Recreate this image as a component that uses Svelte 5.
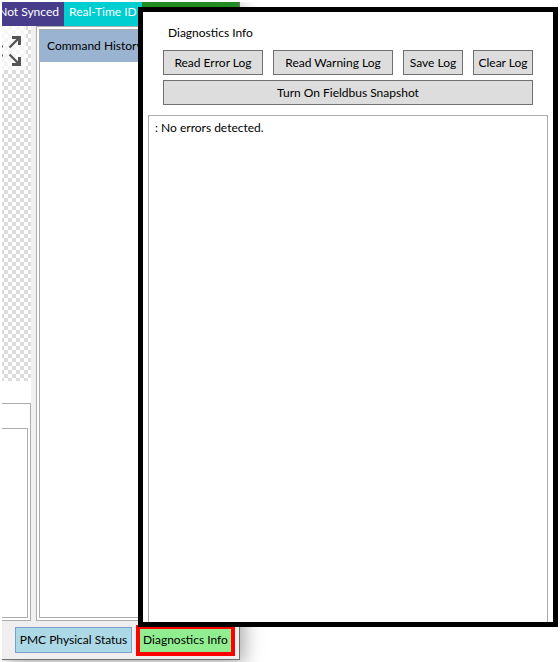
<script>
  const actions = ['Read Error Log', 'Read Warning Log', 'Save Log', 'Clear Log'];
  let log = $state(': No errors detected.');
  let snapshot = $state(false);
</script>

<div class="stage">
  <main class="window">
    <header class="status">
      <span class="sync">Not Synced</span>
      <span class="realtime">Real-Time ID</span>
      <span class="ok"></span>
    </header>

    <div class="body">
      <section class="left">
        <div class="canvas">
          <button class="expand" aria-label="Expand view">
            <svg viewBox="0 0 24 44" width="24" height="44" fill="none" stroke="#555" stroke-width="2.4">
              <path d="M7.500 21.500 17 12M7.500 28.500 17 38" />
              <path d="M10 11.500H17.500V19M10 38.500H17.500V31" stroke-width="3" />
              <path d="M0 20.500H1M0 29.500H1" stroke-width="2" />
            </svg>
          </button>
        </div>
        <div class="pane"><div class="pane-inner"></div></div>
      </section>
      <section class="history">
        <div class="history-inner">
          <h2>Command History</h2>
        </div>
      </section>
    </div>

    <footer>
      <button class="tab">PMC Physical Status</button>
      <button class="tab active">Diagnostics Info</button>
    </footer>
  </main>

  <aside class="popup">
    <h1>Diagnostics Info</h1>
    <div class="actions">
      {#each actions as label}
        <button>{label}</button>
      {/each}
      <button class="wide" onclick={() => (snapshot = !snapshot)}>Turn {snapshot ? 'Off' : 'On'} Fieldbus Snapshot</button>
    </div>
    <output class="log">{log}</output>
  </aside>
</div>

<style>
  :global(body) {
    background: #fff;
  }
  .stage,
  .stage * {
    box-sizing: border-box;
  }
  .stage {
    position: relative;
    height: 100vh;
    min-height: 400px;
    padding: 2px 0;
    overflow: hidden;
    display: flex;
    font: 12px/16px Lato, 'Open Sans', sans-serif;
    color: #000;
  }
  button {
    font: inherit;
    color: inherit;
    padding: 0;
    margin: 0;
    border-radius: 0;
    white-space: nowrap;
  }
  h1,
  h2 {
    margin: 0;
    font: inherit;
  }
  .window {
    flex: 1;
    min-width: 0;
    margin: 0 320px 0 2px;
    display: flex;
    flex-direction: column;
    background: #f0eeee;
    border: solid #6f6f6f;
    border-width: 0 1px 1px 0;
    box-shadow: 4px 4px 18px rgba(0, 0, 0, 0.35);
    clip-path: inset(0 -40px -40px 0);
  }
  .status {
    display: flex;
    height: 24px;
    color: #fff;
    line-height: 20px;
    white-space: nowrap;
  }
  .sync {
    width: 62px;
    padding-right: 5px;
    display: flex;
    justify-content: flex-end;
    background: #483d8b;
  }
  .realtime {
    width: 78px;
    padding-left: 5px;
    background: #00ced1;
  }
  .ok {
    flex: 1;
    background: #228b22;
  }
  .body {
    flex: 1;
    min-height: 0;
    display: flex;
    gap: 5px;
    background: #f0f0f0;
  }
  .left {
    width: 29px;
    display: grid;
    grid-template-rows: 355fr 218fr;
    row-gap: 22px;
    background: #fff;
  }
  .canvas {
    background: repeating-conic-gradient(#dcdcdc 0 25%, #fff 0 50%) 2px 0 / 8px 8px;
  }
  .expand {
    display: block;
    width: 24px;
    height: 44px;
    border: 0;
    background: rgba(255, 255, 255, 0.7);
  }
  .expand svg {
    display: block;
  }
  .pane {
    padding: 24px 2px 2px 0;
    display: flex;
    border: solid #acacac;
    border-width: 1px 1px 1px 0;
  }
  .pane-inner {
    flex: 1;
    border: solid #acacac;
    border-width: 1px 1px 1px 0;
  }
  .history {
    flex: 1;
    min-width: 0;
    padding: 2px;
    display: flex;
    border: 1px solid #acacac;
    background: #fff;
  }
  .history-inner {
    flex: 1;
    border: 1px solid #acacac;
  }
  h2 {
    padding: 8px 7px;
    background: #9ab3d1;
    white-space: nowrap;
  }
  footer {
    height: 38px;
    padding-left: 13px;
    display: flex;
    align-items: center;
    gap: 4px;
  }
  .tab {
    width: 117px;
    height: 26px;
    flex: none;
    border: 1px solid #7b9fd0;
    background: #add8e6;
  }
  .active {
    position: relative;
    z-index: 2;
    width: 99px;
    height: 31px;
    border: 4px solid #f00;
    background: #90ee90;
  }
  .popup {
    position: absolute;
    inset: 7px 2px 35px 138px;
    display: flex;
    flex-direction: column;
    border: 5px solid #000;
    background: #fff;
  }
  h1 {
    padding: 13px 25px 9px;
  }
  .actions {
    display: grid;
    grid-template-columns: 100fr 120fr 60fr 60fr;
    gap: 5px 10px;
    padding: 0 20px;
  }
  .actions button {
    height: 25px;
    min-width: 0;
    border: 1px solid #707070;
    background: #ddd;
  }
  .actions .wide {
    grid-column: 1 / -1;
  }
  .log {
    flex: 1;
    margin: 10px 5px 0;
    padding: 4px 6px;
    border: 1px solid #acacac;
    border-bottom: 0;
  }
</style>
